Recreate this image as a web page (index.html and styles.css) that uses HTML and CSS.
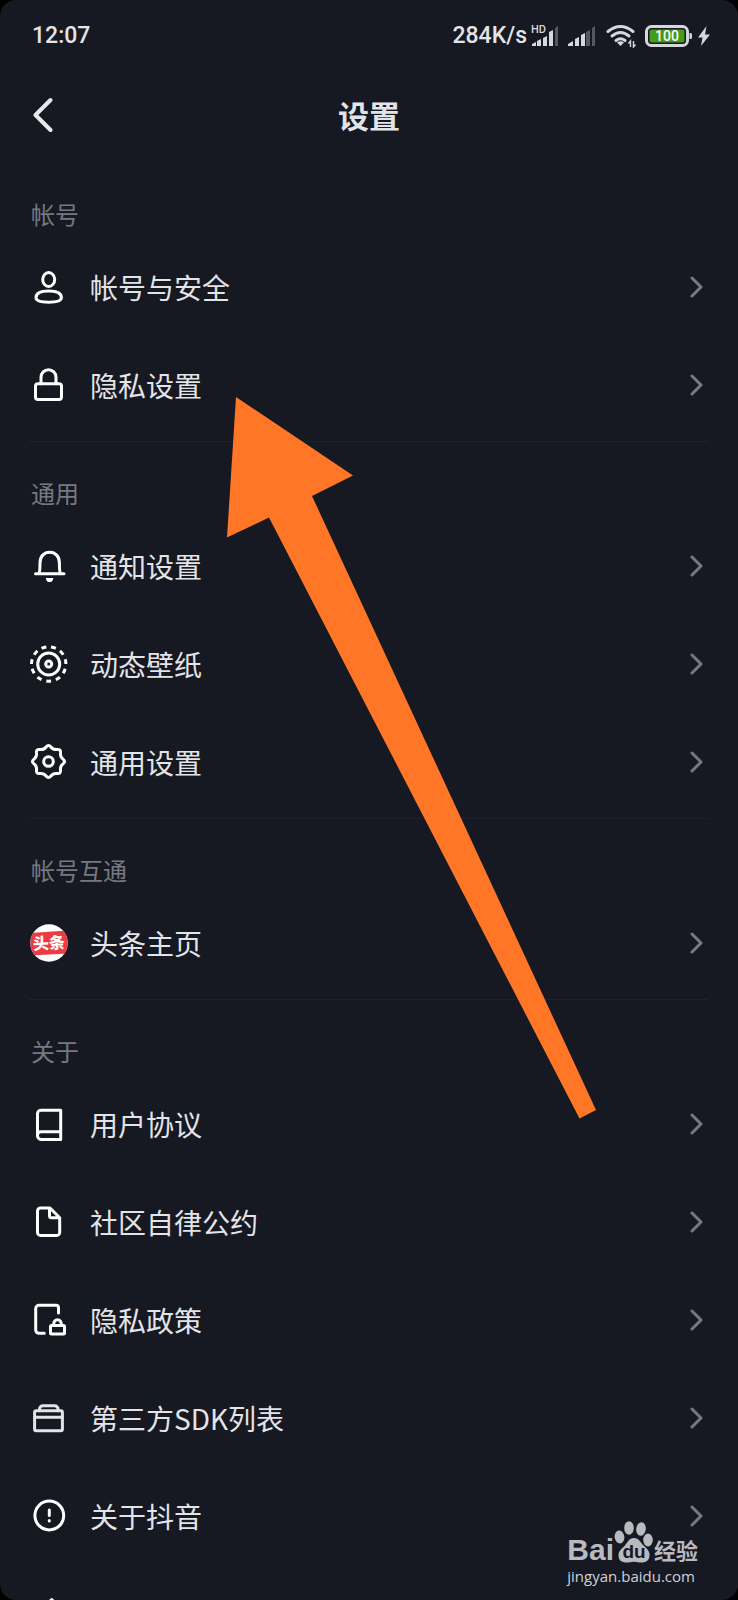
FILE: index.html
```
<!DOCTYPE html>
<html lang="zh-CN">
<head>
    <meta charset="UTF-8">
    <meta name="viewport" content="width=device-width, initial-scale=1.0">
    <title>设置</title>
    <link rel="stylesheet" href="styles.css">
</head>
<body>
    <div class="screen">
        <div class="status">
            <span class="time">12:07</span>
            <span class="speed">284K/s</span>
            <svg class="signal-hd" width="29" height="30" viewBox="0 -4 29 30">
                <text x="0" y="8" class="hd">HD</text>
                <path fill="#d6d7dc" d="M1 21v-2l4-2v4zM6 21v-5l4-2v7zM12 21v-8l4-2v10zM18 21V7l4-2v16z"/>
                <path fill="#555761" d="M24 21V3l3-2v20z"/>
            </svg>
            <svg class="signal" width="29" height="22" viewBox="0 0 29 22">
                <path fill="#d6d7dc" d="M0 21v-2l5-3v5zM7 21v-7l4-2v9zM13 21V10l4-2v13z"/>
                <path fill="#555761" d="M18 21V7l4-2v16zM24 21V3l3-2v20z"/>
            </svg>
            <svg class="wifi" width="30" height="24" viewBox="0 0 30 24">
                <g fill="none" stroke="#d6d7dc" stroke-width="3" stroke-linecap="round">
                    <path d="M2 7.500Q14.500-2.500 27 7.500"/>
                    <path d="M6 12Q14.500 5 23 12"/>
                    <path d="M10 16.500Q14.500 13 19 16.500"/>
                </g>
                <path fill="#d6d7dc" d="M11 18.500q3.500-2.500 7 0L14.500 22z"/>
                <path fill="none" stroke="#d6d7dc" stroke-width="1.400" d="M24.500 23v-6l-2 2.500M27.500 17v6l2-2.500"/>
            </svg>
            <svg class="battery" width="48" height="22" viewBox="0 0 48 22">
                <rect x="1.500" y="1.500" width="41" height="19" rx="5" fill="#161822" stroke="#d6d7dc" stroke-width="3"/>
                <rect x="4.500" y="4.500" width="35" height="13" rx="2" fill="#459b1b"/>
                <path fill="#d6d7dc" d="M44.500 8h1a1.500 1.500 0 0 1 1.500 1.500v3a1.500 1.500 0 0 1-1.500 1.500h-1z"/>
                <text x="22" y="16" text-anchor="middle" class="charge">100</text>
            </svg>
            <svg class="bolt" width="12" height="22" viewBox="0 0 12 22">
                <path fill="#d6d7dc" d="M8.500 1 0 12.500h4.500L3 21l9-11.500H7z"/>
            </svg>
        </div>

        <header class="header">
            <button class="back" type="button" aria-label="返回">
                <svg width="20" height="36" viewBox="0 0 20 36"><path d="M17.500 3 2.500 18l15 15"/></svg>
            </button>
            <h1 class="title">设置</h1>
        </header>

        <main class="list">
            <section class="group">
                <h2 class="group-title">帐号</h2>
                <a class="row" href="#">
                    <svg class="icon" viewBox="0 0 40 40">
                        <ellipse cx="19.700" cy="12.500" rx="6" ry="6.900"/>
                        <path d="M7 30.800C7 26 12 24.100 19.600 24.100S32.400 26 32.400 30.800C32.400 34.500 27 35.200 19.600 35.200S7 34.500 7 30.800z"/>
                    </svg>
                    <span class="label">帐号与安全</span>
                    <svg class="arrow" viewBox="0 0 14 22"><path d="M2 2l9 9-9 9"/></svg>
                </a>
                <a class="row" href="#">
                    <svg class="icon" viewBox="0 0 40 40">
                        <rect x="6.500" y="18.700" width="26" height="15.700" rx="2.500"/>
                        <path d="M12 18.700v-6.500a7.500 7.500 0 0 1 15 0v6.500"/>
                    </svg>
                    <span class="label">隐私设置</span>
                    <svg class="arrow" viewBox="0 0 14 22"><path d="M2 2l9 9-9 9"/></svg>
                </a>
            </section>

            <section class="group">
                <h2 class="group-title">通用</h2>
                <a class="row" href="#">
                    <svg class="icon" viewBox="0 0 40 40">
                        <path d="M6.500 27.700H35M10 27.400c1-2 1-4 1-10.500C11 10.400 15 6.200 20.700 6.200S30.400 10.400 30.400 16.900c0 6.500 0 8.500 1 10.500"/>
                        <path class="solid" d="M16.800 31.900h7.600c-.4 2.800-1.800 4.200-3.800 4.200s-3.400-1.400-3.800-4.200z"/>
                    </svg>
                    <span class="label">通知设置</span>
                    <svg class="arrow" viewBox="0 0 14 22"><path d="M2 2l9 9-9 9"/></svg>
                </a>
                <a class="row" href="#">
                    <svg class="icon" viewBox="0 0 40 40">
                        <circle cx="19.700" cy="20" r="3"/>
                        <circle cx="19.700" cy="20" r="11"/>
                        <circle cx="19.700" cy="20" r="17.200" pathLength="110" stroke-dasharray="5 5" stroke-dashoffset="2.500" transform="rotate(90 19.700 20)"/>
                    </svg>
                    <span class="label">动态壁纸</span>
                    <svg class="arrow" viewBox="0 0 14 22"><path d="M2 2l9 9-9 9"/></svg>
                </a>
                <a class="row" href="#">
                    <svg class="icon" viewBox="-19.500 -19.500 40 40">
                        <circle r="4.800"/>
                        <path d="M-2.400-14.500Q0-17.600 2.400-14.500Q4.750-11.460 8.600-12Q12.450-12.450 12-8.600Q11.460-4.750 14.500-2.400Q17.600 0 14.500 2.400Q11.460 4.750 12 8.600Q12.450 12.450 8.600 12Q4.750 11.460 2.400 14.500Q0 17.600-2.400 14.500Q-4.750 11.460-8.600 12Q-12.450 12.450-12 8.600Q-11.460 4.750-14.500 2.400Q-17.600 0-14.500-2.400Q-11.460-4.750-12-8.600Q-12.450-12.450-8.600-12Q-4.750-11.460-2.400-14.500z"/>
                    </svg>
                    <span class="label">通用设置</span>
                    <svg class="arrow" viewBox="0 0 14 22"><path d="M2 2l9 9-9 9"/></svg>
                </a>
            </section>

            <section class="group">
                <h2 class="group-title">帐号互通</h2>
                <a class="row" href="#">
                    <svg class="icon logo" viewBox="0 0 40 40">
                        <defs><clipPath id="round"><circle cx="20" cy="20" r="18.700"/></clipPath></defs>
                        <circle cx="20" cy="20" r="18.700" fill="#fff"/>
                        <path clip-path="url(#round)" fill="#ee3b40" d="M0 10 40 7.500v23L0 32.500z"/>
                        <text x="20" y="26" text-anchor="middle" transform="rotate(-3 20 20)">头条</text>
                    </svg>
                    <span class="label">头条主页</span>
                    <svg class="arrow" viewBox="0 0 14 22"><path d="M2 2l9 9-9 9"/></svg>
                </a>
            </section>

            <section class="group">
                <h2 class="group-title">关于</h2>
                <a class="row" href="#">
                    <svg class="icon" viewBox="0 0 40 40">
                        <path d="M31.700 35.400V6.300H12a3.500 3.500 0 0 0-3.500 3.500v22A3.600 3.600 0 0 0 12 35.400zM31.700 27.800H12A3.500 3.500 0 0 0 8.500 31"/>
                    </svg>
                    <span class="label">用户协议</span>
                    <svg class="arrow" viewBox="0 0 14 22"><path d="M2 2l9 9-9 9"/></svg>
                </a>
                <a class="row" href="#">
                    <svg class="icon" viewBox="0 0 40 40">
                        <path d="M21 6h-9.500a3 3 0 0 0-3 3v21.400a3 3 0 0 0 3 3h16.200a3 3 0 0 0 3-3V15.700zM20.500 6.500v7.200a2 2 0 0 0 2 2h8"/>
                    </svg>
                    <span class="label">社区自律公约</span>
                    <svg class="arrow" viewBox="0 0 14 22"><path d="M2 2l9 9-9 9"/></svg>
                </a>
                <a class="row" href="#">
                    <svg class="icon" viewBox="0 0 40 40">
                        <path d="M15.300 33.300H10A3.300 3.300 0 0 1 6.700 30V8.600A3.300 3.300 0 0 1 10 5.300h17a2.500 2.500 0 0 1 2.500 2.500v5.300"/>
                        <rect x="21.500" y="25.500" width="14" height="8.500" rx="1"/>
                        <path d="M24.800 25.500v-2a3.700 3.700 0 0 1 7.400 0v2"/>
                    </svg>
                    <span class="label">隐私政策</span>
                    <svg class="arrow" viewBox="0 0 14 22"><path d="M2 2l9 9-9 9"/></svg>
                </a>
                <a class="row" href="#">
                    <svg class="icon dim" viewBox="0 0 40 40">
                        <rect x="5.600" y="12.800" width="27.800" height="20" rx="1.500"/>
                        <path d="M5.600 19.200h27.800M10.500 12.800v-1.500A3.500 3.500 0 0 1 14 7.800h11.600a3.500 3.500 0 0 1 3.500 3.500v1.500"/>
                    </svg>
                    <span class="label">第三方SDK列表</span>
                    <svg class="arrow" viewBox="0 0 14 22"><path d="M2 2l9 9-9 9"/></svg>
                </a>
                <a class="row" href="#">
                    <svg class="icon" viewBox="0 0 40 40">
                        <circle cx="20.300" cy="19.500" r="14.400"/>
                        <path stroke-width="3" d="M20.300 14v5.500M20.300 24.500v.400"/>
                    </svg>
                    <span class="label">关于抖音</span>
                    <svg class="arrow" viewBox="0 0 14 22"><path d="M2 2l9 9-9 9"/></svg>
                </a>
                <!-- continues below the fold -->
                <div class="row">
                    <svg class="icon" viewBox="0 0 40 40"><path d="M22.700 5.500 35 18H10z"/></svg>
                </div>
            </section>
        </main>

        <svg class="pointer" width="369" height="722" viewBox="0 0 369 722">
            <path fill="#ff7627" d="M9 0 126 78.500 85 99 369 713 352.500 721.500 42 120.500 0 140.500z"/>
        </svg>

        <div class="watermark">
            <div class="brand">
                <span class="bai">Bai</span>
                <svg class="paw" width="40" height="42" viewBox="0 0 40 42">
                    <ellipse cx="5.500" cy="16" rx="4.800" ry="6.500" transform="rotate(-8 5.500 16)"/>
                    <ellipse cx="15" cy="7" rx="4.800" ry="6.700"/>
                    <ellipse cx="27" cy="8" rx="4.800" ry="6.700" transform="rotate(8 27 8)"/>
                    <ellipse cx="34" cy="19" rx="4.800" ry="6.500"/>
                    <path d="M20 17c5 0 6.500 4.500 9.500 7.500 4 3.800 6.500 6 6 10.500-.5 5-4.500 6.500-8 6.500-3 0-4-.8-7.500-.8s-4.500.8-7.500.8c-4.500 0-8-2-8-7 0-4.500 2.500-6 6-9.500C13.500 21.500 15 17 20 17z"/>
                    <text x="20" y="37" text-anchor="middle">du</text>
                </svg>
                <span class="jingyan">经验</span>
            </div>
            <div class="url">jingyan.baidu.com</div>
        </div>
    </div>
</body>
</html>
```

FILE: styles.css
```
* {
    box-sizing: border-box;
}
body {
    margin: 0;
    background: #000;
    color: #e3e4e8;
    font-family: "Noto Sans CJK SC", sans-serif;
}
.screen {
    position: relative;
    height: 100vh;
    overflow: hidden;
    background: #161822;
    border-radius: 16px;
}
svg {
    display: block;
    flex: none;
}

/* status bar */
.status {
    display: flex;
    align-items: center;
    height: 71px;
    padding: 0 28px 0 32px;
    font-family: Roboto, sans-serif;
    font-size: 23px;
    font-weight: 500;
}
.time {
    flex: 1;
}
.signal-hd {
    margin-left: 4px;
}
.signal {
    margin-left: 8px;
}
.wifi {
    margin-left: 9px;
}
.battery {
    margin-left: 9px;
}
.bolt {
    margin-left: 5px;
}
.hd {
    fill: #d6d7dc;
    font-size: 11px;
}
.charge {
    fill: #fff;
    font-size: 14px;
}

/* title bar */
.header {
    display: flex;
    align-items: center;
    justify-content: center;
    position: relative;
    height: 87px;
}
.back {
    position: absolute;
    left: 33px;
    padding: 0;
    border: 0;
    background: none;
}
.back path {
    fill: none;
    stroke: #e8e9ed;
    stroke-width: 4;
    stroke-linecap: round;
    stroke-linejoin: round;
}
.title {
    margin: 0;
    font-size: 31px;
    font-weight: 700;
    line-height: 40px;
}

/* settings list */
.list {
    padding: 5px 30px 0 29px;
}
.group {
    padding: 27px 0 7px;
    border-bottom: 1px solid #20222b;
}
.group-title {
    margin: 0;
    height: 48px;
    padding-left: 2px;
    color: #777982;
    font-size: 24px;
    font-weight: 400;
    line-height: 48px;
}
.row {
    display: flex;
    align-items: center;
    height: 98px;
    padding-right: 4px;
    color: inherit;
    text-decoration: none;
}
.icon {
    width: 40px;
    height: 40px;
    fill: none;
    stroke: #fff;
    stroke-width: 3px;
    stroke-linecap: round;
    stroke-linejoin: round;
}
.icon [stroke-dasharray] {
    stroke-linecap: butt;
}
.icon .solid {
    fill: #fff;
    stroke: none;
}
.dim {
    stroke: #e3e4e8;
}
.logo {
    stroke: none;
}
.logo text {
    fill: #fff;
    font-size: 16px;
    font-weight: 900;
}
.label {
    flex: 1;
    margin-left: 21px;
    font-size: 28px;
    line-height: 40px;
}
.arrow {
    width: 14px;
    height: 22px;
    fill: none;
    stroke: #777982;
    stroke-width: 3px;
    stroke-linecap: round;
    stroke-linejoin: round;
}

/* orange arrow over the list */
.pointer {
    position: absolute;
    left: 227px;
    top: 397px;
    pointer-events: none;
}

/* watermark */
.watermark {
    position: absolute;
    right: 40px;
    bottom: 14px;
    color: #b9bac0;
}
.brand {
    display: flex;
    align-items: flex-end;
    height: 42px;
}
.bai {
    font-family: "Liberation Sans", sans-serif;
    font-size: 30px;
    font-weight: 700;
    line-height: 26px;
}
.paw {
    fill: #b9bac0;
}
.paw text {
    fill: #161822;
    font-family: "Liberation Sans", sans-serif;
    font-size: 19px;
    font-weight: 700;
}
.jingyan {
    font-size: 22px;
    font-weight: 700;
    line-height: 28px;
}
.url {
    margin-top: 3px;
    color: #d0d1d5;
    font-family: "Open Sans", sans-serif;
    font-size: 15px;
    line-height: 20px;
}
```
